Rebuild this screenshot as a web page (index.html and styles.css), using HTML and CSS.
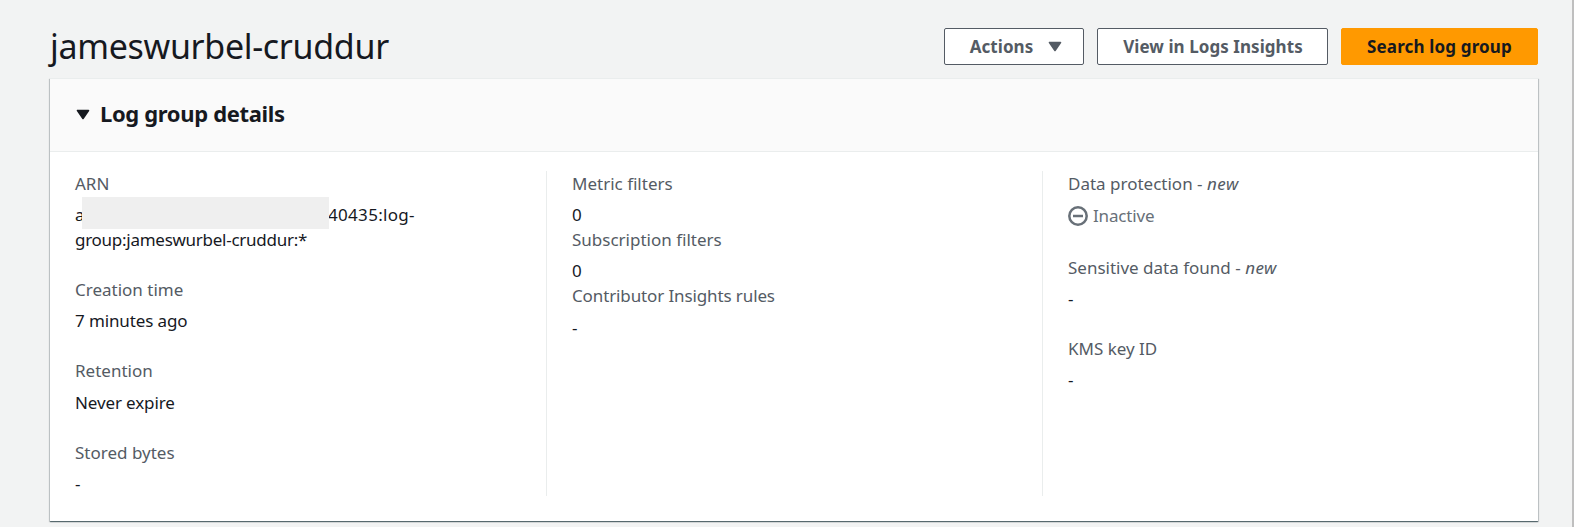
FILE: index.html
```html
<!DOCTYPE html>
<html lang="en">
<head>
<meta charset="utf-8">
<title>jameswurbel-cruddur</title>
<link rel="stylesheet" href="styles.css">
</head>
<body>
<main class="page">
  <header class="page-header">
    <h1 class="title">jameswurbel-cruddur</h1>
    <div class="actions">
      <button class="btn btn-menu">Actions
        <svg class="caret" width="14" height="12" viewBox="0 0 14 12"><path d="M1.5 1.5h11L7 9.5z" fill="currentColor" stroke="currentColor" stroke-width="1.6" stroke-linejoin="round"/></svg>
      </button>
      <button class="btn btn-insights">View in Logs Insights</button>
      <button class="btn btn-primary">Search log group</button>
    </div>
  </header>
  <section class="card">
    <div class="card-header">
      <svg class="caret" width="14" height="12" viewBox="0 0 14 12"><path d="M1.5 1.5h11L7 9.5z" fill="currentColor" stroke="currentColor" stroke-width="1.6" stroke-linejoin="round"/></svg>
      <h2 class="card-title">Log group details</h2>
    </div>
    <div class="columns">
      <dl class="column spaced">
        <div class="field"><dt>ARN</dt><dd class="arn">a<span class="redacted"></span><span class="arn-tail">40435:log-</span><br><span class="arn-group">group:jameswurbel-cruddur:*</span></dd></div>
        <div class="field"><dt>Creation time</dt><dd class="snug">7 minutes ago</dd></div>
        <div class="field"><dt>Retention</dt><dd class="snug">Never expire</dd></div>
        <div class="field"><dt>Stored bytes</dt><dd>-</dd></div>
      </dl>
      <dl class="column">
        <div class="field"><dt>Metric filters</dt><dd>0</dd></div>
        <div class="field"><dt>Subscription filters</dt><dd>0</dd></div>
        <div class="field"><dt class="snug">Contributor Insights rules</dt><dd>-</dd></div>
      </dl>
      <dl class="column spaced">
        <div class="field"><dt>Data protection - <em>new</em></dt>
          <dd class="status"><svg width="20" height="20" viewBox="0 0 20 20" fill="none" stroke="currentColor"><circle cx="10" cy="10" r="8.7" stroke-width="2.5"/><path d="M5 10h10" stroke-width="2.5"/></svg><span>Inactive</span></dd></div>
        <div class="field"><dt>Sensitive data found - <em>new</em></dt><dd>-</dd></div>
        <div class="field"><dt>KMS key ID</dt><dd>-</dd></div>
      </dl>
    </div>
  </section>
</main>
</body>
</html>
```
FILE: styles.css
```css
* { box-sizing: border-box; }
body {
  margin: 0;
  background: #f2f3f3;
  color: #16191f;
  font: 17px/25px "Noto Sans", sans-serif;
}
.page {
  height: 527px;
  padding: 28px 34px 0 50px;
  border-right: 2px solid #bfbfbf;
  overflow: hidden;
}
.page-header {
  display: flex;
  justify-content: space-between;
  height: 50px;
}
.title {
  margin: -4px 0 0;
  font-size: 34px;
  font-weight: 400;
  line-height: 45px;
  letter-spacing: -0.32px;
}
.actions { display: flex; gap: 13px; }
.btn {
  display: flex;
  align-items: center;
  justify-content: center;
  height: 37px;
  padding: 0;
  border: 1px solid #545b64;
  border-radius: 2px;
  background: #fff;
  color: #545b64;
  font: 700 17px/25px "Noto Sans", sans-serif;
  letter-spacing: 0.06px;
}
.btn-menu { width: 140px; padding-left: 4px; gap: 15px; }
.btn-insights { width: 231px; padding-left: 1px; }
.btn-primary {
  width: 197px;
  border-color: #ff9900;
  background: #ff9900;
  color: #16191f;
  letter-spacing: 0.15px;
}
.caret { flex: none; }
.card {
  height: 443px;
  background: #fff;
  border-top: 1px solid #eaeded;
  box-shadow: 0 1px 1px 0 rgba(0, 28, 36, 0.5), 1px 1px 1px 0 rgba(0, 28, 36, 0.15), -1px 1px 1px 0 rgba(0, 28, 36, 0.15);
}
.card-header {
  display: flex;
  align-items: center;
  gap: 10px;
  height: 73px;
  padding: 0 26px;
  background: #fafafa;
  border-bottom: 1px solid #eaeded;
}
.card-title {
  margin: 0;
  padding-bottom: 4px;
  font-size: 22px;
  line-height: 30px;
  letter-spacing: -0.35px;
}
.columns {
  display: grid;
  grid-template-columns: repeat(3, 1fr);
  padding-top: 19px;
}
.column {
  display: flex;
  flex-direction: column;
  height: 325px;
  margin: 0;
  padding-left: 25px;
}
.column + .column { border-left: 1px solid #eaeded; }
.spaced { gap: 25px; }
dt { color: #545b64; }
dt em { letter-spacing: 0.5px; }
dd { margin: 6px 0 0; }
.field:nth-child(n+2) dd { margin-top: 6.3px; }
.arn { height: 50px; white-space: nowrap; }
.redacted {
  position: relative;
  display: inline-block;
  width: 247px;
  height: 32px;
  margin: -5px -1px -2px -2.5px;
  vertical-align: top;
  background: #efefef;
}
.arn-tail { letter-spacing: 0.3px; }
.arn-group { letter-spacing: -0.27px; }
.snug { letter-spacing: -0.12px; }
.status {
  display: flex;
  align-items: center;
  gap: 5px;
  height: 26px;
  margin: 6.5px 0 1px;
  color: #687078;
  letter-spacing: -0.15px;
}
```
